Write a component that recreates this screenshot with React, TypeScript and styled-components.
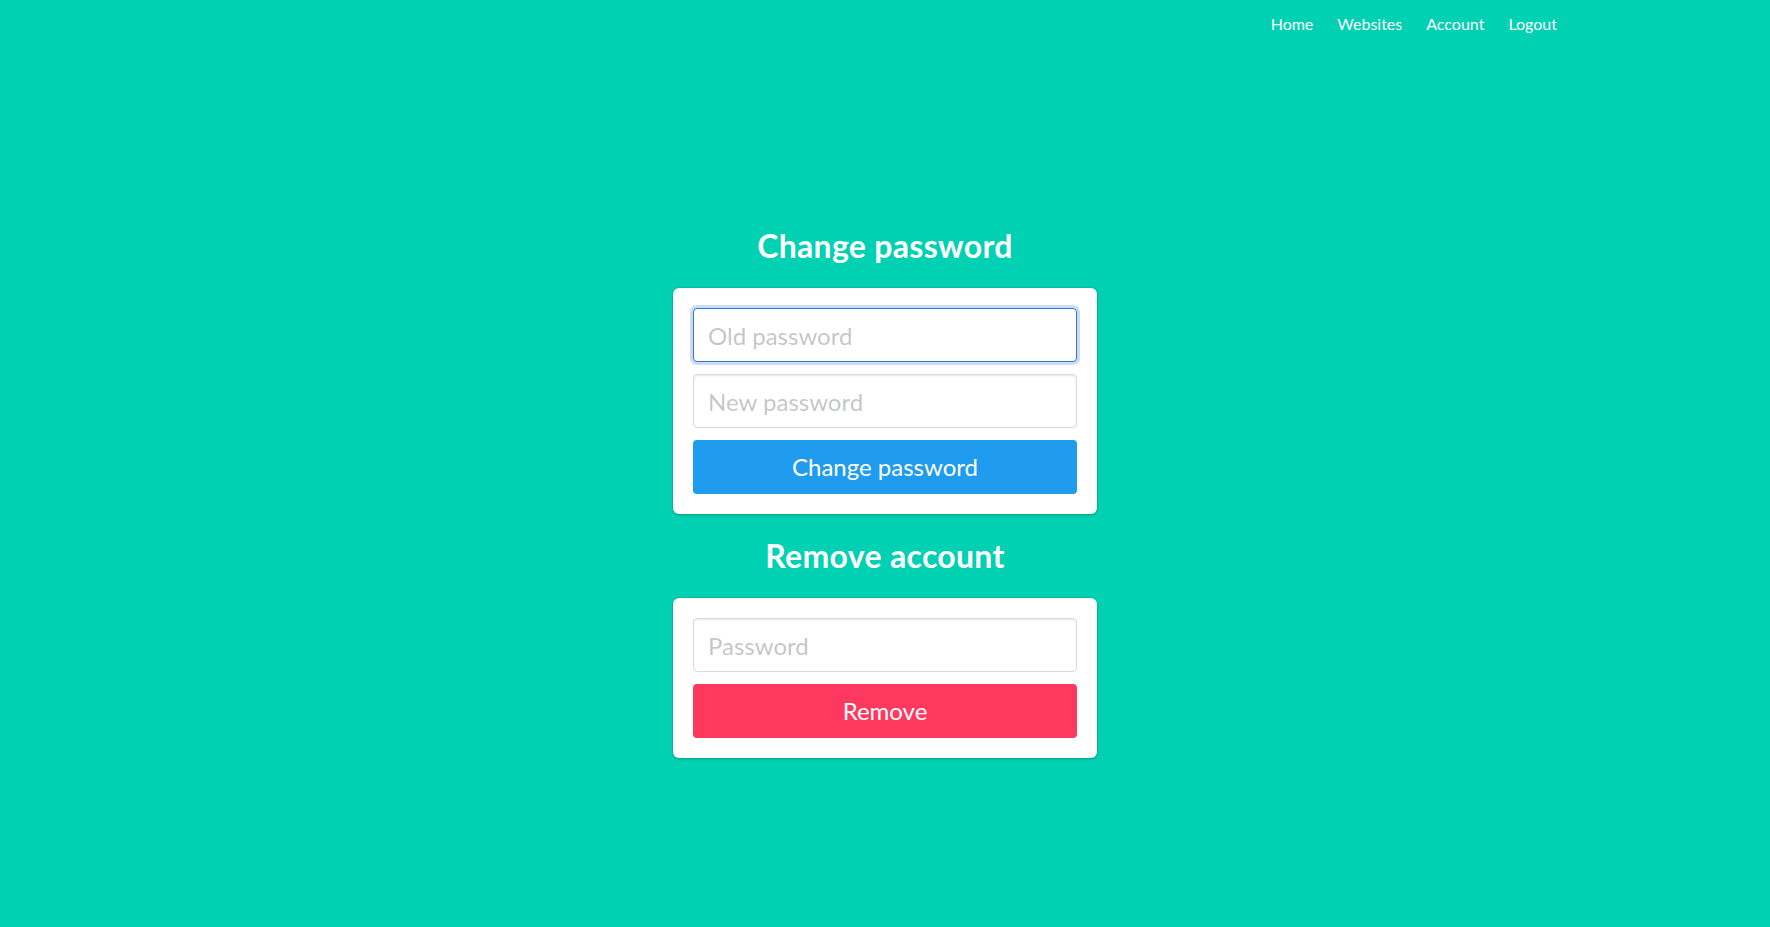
import React from "react";
import styled, { createGlobalStyle, css } from "styled-components";

const GlobalStyle = createGlobalStyle`
  *, *::before, *::after { box-sizing: border-box; }
  html, body { margin: 0; padding: 0; }
  body {
    background: #00d1b2;
    font-family: "Segoe UI", Lato, "Open Sans", sans-serif;
    font-size: 16px;
    color: #4a4a4a;
  }
`;

const Page = styled.div`
  min-height: 100vh;
  display: flex;
  flex-direction: column;
  background: #00d1b2;
`;

const Navbar = styled.nav`
  height: 52px;
  display: flex;
  justify-content: center;
`;

const NavContainer = styled.div`
  width: 1344px;
  display: flex;
  justify-content: flex-end;
  align-items: stretch;
`;

const NavEnd = styled.div`
  display: flex;
  align-items: stretch;
  margin-right: -12px;
`;

const NavItem = styled.a`
  display: flex;
  align-items: center;
  padding: 6px 12px 10px;
  color: #ffffff;
  font-size: 16px;
  line-height: 1.5;
  text-decoration: none;
  cursor: pointer;
`;

const Main = styled.main`
  flex: 1;
  display: flex;
  align-items: center;
  justify-content: center;
  padding-top: 7px;
`;

const Column = styled.div`
  width: 424px;
  display: flex;
  flex-direction: column;
`;

const Title = styled.h1`
  margin: 0 0 24px;
  color: #ffffff;
  font-size: 32px;
  font-weight: 700;
  line-height: 1.125;
  letter-spacing: 0.3px;
  text-align: center;
`;

const Box = styled.form`
  background: #ffffff;
  border-radius: 6px;
  box-shadow: 0 2px 3px rgba(10, 10, 10, 0.1), 0 0 0 1px rgba(10, 10, 10, 0.1);
  padding: 20px;
  margin-bottom: 24px;
  display: flex;
  flex-direction: column;
  gap: 12px;
  &:last-child { margin-bottom: 0; }
`;

const Input = styled.input<{ $focused?: boolean }>`
  width: 100%;
  height: 54px;
  padding: 0 15px 0 14px;
  font-family: inherit;
  font-size: 24px;
  color: #363636;
  background: #ffffff;
  border: 1px solid #dbdbdb;
  border-radius: 4px;
  box-shadow: inset 0 1px 2px rgba(10, 10, 10, 0.1);
  outline: none;
  &::placeholder { color: rgba(54, 54, 54, 0.3); }
  ${(p) =>
    p.$focused &&
    css`
      border-color: #3273dc;
      box-shadow: 0 0 0 3px rgba(50, 115, 220, 0.25);
    `}
`;

const Button = styled.button<{ $tone: "info" | "danger" }>`
  width: 100%;
  height: 54px;
  border: 1px solid transparent;
  border-radius: 4px;
  background: ${(p) => (p.$tone === "info" ? "#209cee" : "#ff3860")};
  color: #ffffff;
  font-family: inherit;
  font-size: 24px;
  line-height: 1.5;
  cursor: pointer;
  padding: 0 20px;
`;

export default function App() {
  return (
    <>
      <GlobalStyle />
      <Page>
        <Navbar>
          <NavContainer>
            <NavEnd>
              <NavItem>Home</NavItem>
              <NavItem>Websites</NavItem>
              <NavItem>Account</NavItem>
              <NavItem>Logout</NavItem>
            </NavEnd>
          </NavContainer>
        </Navbar>
        <Main>
          <Column>
            <Title>Change password</Title>
            <Box onSubmit={(e) => e.preventDefault()}>
              <Input type="password" placeholder="Old password" $focused />
              <Input type="password" placeholder="New password" />
              <Button type="submit" $tone="info">Change password</Button>
            </Box>
            <Title>Remove account</Title>
            <Box onSubmit={(e) => e.preventDefault()}>
              <Input type="password" placeholder="Password" />
              <Button type="submit" $tone="danger">Remove</Button>
            </Box>
          </Column>
        </Main>
      </Page>
    </>
  );
}
